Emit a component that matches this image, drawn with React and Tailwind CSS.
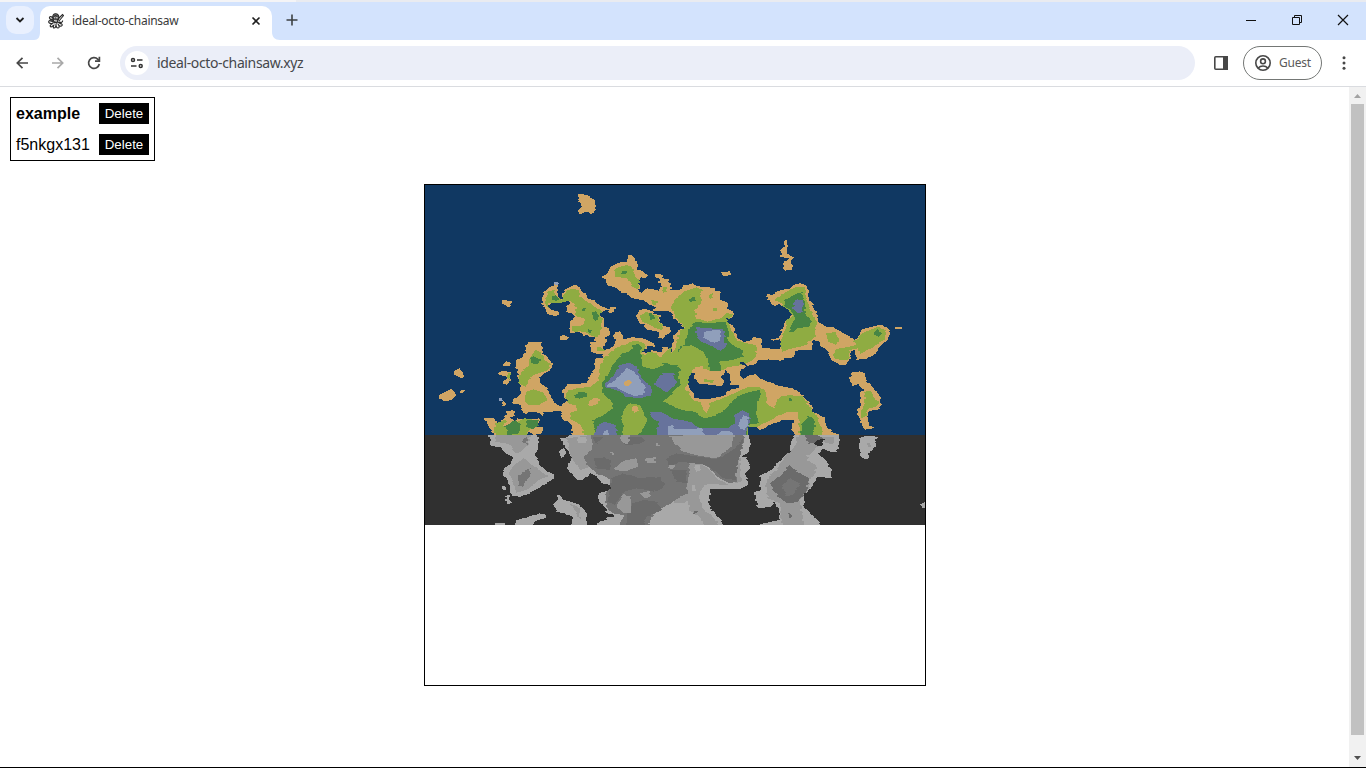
import React from "react";

// Survey frames: origin of each sheet, at three units per pixel.
const FRAMES = {
  A: [480, 250], B: [620, 250], C: [740, 230], D: [480, 370],
  E: [620, 370], F: [740, 370], G: [424, 180], H: [560, 330],
};

// Repeatable coastline roughness, between -1 and 1 pixel.
function rough(x, y) {
  const n = Math.sin(Math.floor(x / 7) * 12.9898 + Math.floor(y / 2) * 78.233) * 43758.5453;
  return (n - Math.floor(n)) * 2.2 - 1.1;
}

// Turns an outline into square cells, row by row.
function cells(src) {
  let frame = FRAMES.A;
  const pts = [];
  src.trim().split(/\s+/).forEach((t) => {
    if (FRAMES[t]) frame = FRAMES[t];
    else {
      const [x, y] = t.split(",").map(Number);
      pts.push([frame[0] + x / 3 - 425, frame[1] + y / 3 - 185]);
    }
  });
  const ys = pts.map((p) => p[1]);
  const top = Math.max(0, Math.floor(Math.min(...ys)));
  const end = Math.min(340, Math.max(...ys));
  let d = "";
  for (let y = top; y < end; y += 1) {
    const c = y + 0.5;
    const xs = [];
    pts.forEach((p, i) => {
      const q = pts[(i + 1) % pts.length];
      if (p[1] <= c !== q[1] <= c) xs.push(p[0] + ((c - p[1]) / (q[1] - p[1])) * (q[0] - p[0]));
    });
    xs.sort((a, b) => a - b);
    for (let i = 0; i + 1 < xs.length; i += 2) {
      const a = Math.round(xs[i] + rough(xs[i], y));
      const b = Math.min(500, Math.round(xs[i + 1] + rough(xs[i + 1], y)));
      if (b > a) d += `M${a} ${y}h${b - a}v1h${a - b}z`;
    }
  }
  return d;
}

const SAND = "#d0a564", GREEN = "#8fac42", FOREST = "#478544", SLATE = "#67739c", PEAK = "#909fbb", SEA = "#103862";

const COLOR_LAYERS = [
  [SAND, [
    "A 64,154 72,150 90,152 96,160 90,170 82,172 74,164 66,162",
    "A 184,145 190,130 205,112 217,108 224,97 234,98 230,106 232,120 236,145 248,148 246,132 262,115 280,108 290,103 300,112 305,122 315,130 320,140 330,148 345,152 352,160 368,170 388,178 392,172 404,172 404,186 392,190 384,180 366,184 360,196 372,204 374,230 386,234 388,256 378,260 376,286 368,290 372,312 350,312 334,304 330,278 344,276 345,262 330,262 320,252 310,258 300,246 285,248 268,250 268,234 272,230 270,212 285,204 276,190 260,186 262,168 270,160 262,152 248,156 236,160 215,160 205,168 214,178 232,184 236,196 222,198 205,192 195,172 186,160",
    "A 240,262 252,254 266,262 264,270 242,270",
    "A 54,370 70,362 90,366 94,380 88,396 78,404 68,402 68,392 80,386 76,378 60,376",
    "A 66,344 80,334 92,340 88,348 68,348",
    "D 64,96 72,94 78,106 68,108",
    "D 14,145 45,145 50,160 75,145 80,125 100,120 105,138 90,142 105,155 115,145 140,150 175,145 180,155 160,172 185,170 185,190 165,195 150,185 130,197 40,197 35,180 20,160",
    `D 245,108 262,90 252,85 248,62 258,52 262,42 A 320,400 332,376 344,358 344,336 352,324 372,325 368,316 376,296 392,296 408,278 402,262 404,246 418,244 428,256 424,268 460,262 490,264 524,280 524,290 504,288 502,296 484,300 B 72,306 88,310 95,300 112,305 125,305 130,292 146,292 148,310 160,305 155,290 162,270 162,256 178,240 195,234 180,222 165,210 150,185 130,182 100,182 105,172 85,160 70,152 45,146 35,142 20,130 0,128 A 418,122 400,110 384,106 376,88 362,80 380,72 392,50 410,40 440,34 B 24,18 36,14 46,24 50,40 54,48 50,58 64,62 84,74 80,84 64,82 56,92 60,110 52,120 66,128 80,115 115,122 120,110 130,112 115,95 118,84 106,82 106,72 128,74 130,84 142,88 150,100 154,120 185,118 190,106 222,100 228,108 280,114 284,122 300,125 300,150 322,158 324,176 344,188 340,200 330,206 318,205 320,218 338,225 345,248 350,264 372,276 395,270 400,262 424,264 424,292 450,296 480,298
     C 122,345 122,328 100,332 95,328 118,322 125,300 135,275 150,262 160,248 148,236 130,228 118,222 105,228 95,224 85,210 78,200 82,192 95,195 120,180 150,176 165,162 185,160 200,170 208,185 206,205 220,225 232,255 240,280 262,290 285,292 300,305 325,318 345,330 360,318 365,300 385,292 412,286 430,286 444,296 448,310 445,328 422,345 410,370 380,385 350,390 346,360 332,365 330,385 320,405 300,405 280,395 270,385 262,365 245,350 240,335 218,330 215,360 190,360 165,362 160,382 135,385 125,392 85,388 50,392 48,402 20,408 B 365,358
     E 358,12 365,28 385,18 405,12 420,26 445,36 460,40 F 110,46 130,50 155,54 175,65 200,88 215,108 220,125 250,140 255,160 275,185 300,197 165,197 155,180 162,150 130,150 100,160 60,180 50,168 25,170 25,197 D 278,197 275,165 250,148 240,122 215,125 190,125 185,140 175,128 150,125 135,132 122,118 120,102 95,100 100,88 118,78 124,60 115,25 112,0 A 112,370 108,350 106,330 130,320 138,300 138,284 150,276 184,276 188,290 186,308 205,322 216,340 216,352 205,365 185,375 180,385 D 180,20 185,40 200,55 215,85 232,106`,
    "B 50,195 58,182 75,176 95,182 100,190 120,195 118,210 125,225 150,232 154,245 140,252 132,266 118,264 112,245 88,240 75,235 72,222 55,220",
    "F 326,30 335,8 360,4 375,10 376,30 395,50 405,60 422,85 425,105 415,120 390,122 380,140 385,165 405,172 385,178 375,180 365,165 358,145 350,120 362,108 360,70 370,60 355,42 340,48",
    "C 134,30 142,30 142,70 160,82 155,95 160,118 135,122 128,115 135,95 148,85 122,80 122,60 132,50",
    "C 464,290 484,290 484,298 464,298",
    "B 304,66 330,64 328,76 308,78",
    "G 462,42 490,45 512,60 516,85 505,102 490,96 475,98 466,104 462,95 475,80 462,60",
    "G 88,575 105,565 118,580 120,596 108,592 90,585",
    "G 48,645 80,626 98,645 80,660 60,664 46,655",
    "G 108,631 120,631 118,639 108,639",
  ]],
  [GREEN, [
    "A 196,148 205,125 222,118 226,140 246,150 248,140 262,122 280,116 295,122 300,140 315,152 330,160 345,170 365,182 360,200 368,206 362,240 356,262 330,256 318,246 300,244 290,246 276,242 278,228 300,228 314,222 316,208 300,202 285,198 288,170 275,155 262,152 240,160 205,160 208,175 198,165",
    "A 80,368 90,368 92,382 86,390 80,384",
    "A 350,292 360,290 372,302 352,304",
    "B -16,60 0,50 20,45 35,50 45,75 60,95 50,120 35,105 20,85 -15,80",
    "A 116,400 120,370 145,345 150,325 165,300 185,310 195,330 212,345 200,362 160,375 150,385 140,410 D 115,40 118,10",
    "D 138,65 160,58 190,68 200,90 180,105 150,105 135,95",
    "D 45,160 80,148 70,170 100,165 110,155 135,145 165,150 150,180 135,197 45,197",
    `D 262,100 256,80 262,62 290,55 330,50 355,30 A 358,376 362,345 370,325 385,315 400,300 430,285 460,272 485,276 500,290 B 62,312 95,318 125,320 150,315 165,300 178,245 195,234 180,218 160,190 155,170 165,150 190,125 215,118 230,112 245,118 248,150 225,180 228,205 260,215 300,205 318,190 338,192 330,206 318,205 328,222 335,245 350,272 380,280 408,285 410,310 400,330 370,345 330,350 300,362 270,362 235,350 222,365 205,400 190,420 E 190,60 215,85 240,95 290,90 340,72 380,50 420,50 440,70 440,100 460,115 480,80 E 510,75 F 190,80 205,105 225,130 240,160 250,185 245,197 178,197 175,125 140,125 110,140 60,165 50,170 25,170 25,197 D 312,197 305,165 275,150 270,130 290,120 285,105`,
    "B 62,196 80,186 100,192 116,200 115,215 130,228 128,240 110,236 90,224 65,215",
    "C 102,212 130,190 165,172 195,170 200,205 210,235 230,280 225,320 195,345 125,365 122,335 135,300 140,270 160,258 135,232 120,215",
    "C 262,310 285,305 300,330 285,345 265,335",
    "C 285,358 330,350 355,342 335,334 350,330 370,310 410,290 435,300 438,325 400,350 360,372 355,355 330,360 325,390 290,388 280,375",
    "F 375,65 395,62 400,85 418,95 410,110 385,115 380,135 362,145 360,125 375,100",
    "B 95,150 110,152 110,166 98,162", "B 128,112 140,110 140,124 126,130",
  ]],
  [SAND, [
    "B 230,185 245,150 240,125 270,118 295,128 298,155 318,165 305,190 285,205 240,208 225,200",
    "D 325,95 345,84 360,86 355,98 335,110 322,105", "E 240,85 270,86 268,110 262,128 250,120 245,105",
  ]],
  [GREEN, ["B 265,135 278,130 280,144 268,146", "B 280,175 292,175 292,182 280,182"]],
  [FOREST, [
    "A 214,140 228,136 238,148 230,152 216,150", "A 306,174 318,176 314,184 306,182", "A 336,188 350,184 356,198 352,208 344,214 336,206", "A 326,238 338,240 334,250 326,246",
    "B 3,62 18,62 18,72 3,72", "A 150,328 160,318 185,330 175,342 155,340",
    "D 75,170 105,150 120,165 118,190 85,195", "D 140,150 175,150 175,165 155,178 140,170", "D 283,75 300,66 322,68 320,80 300,86 285,84",
    "D 345,197 338,150 370,135 400,115 395,95 370,75 365,45 385,10 A 385,370 400,340 430,310 455,300 460,285 475,282 485,290 480,310 B 65,320 65,345 80,352 125,345 130,335 150,345 175,345 185,350 180,380 185,415 E 180,50 160,75 130,90 150,105 185,120 220,125 255,145 290,135 320,115 350,80 390,65 420,60 422,80 412,100 410,140 415,160 385,165 380,197",
    "B 175,305 180,290 195,285 205,240 225,215 260,220 315,215 325,240 325,275 345,290 368,300 370,320 340,330 300,335 300,362 270,364 265,325 245,315 225,290 205,295 190,315",
    "B 208,146 225,140 227,152 214,156", "B 86,190 100,190 102,206 90,210",
    "F 180,197 185,165 205,138 225,150 225,175 215,197", "F 145,85 155,85 155,92 145,92",
    "C 135,210 165,195 185,185 195,215 195,250 212,275 205,290 175,295 165,306 150,305 155,280 165,262 150,240 135,228",
    "C 405,308 412,296 425,310 415,320 405,316",
  ]],
  [GREEN, [
    "D 435,110 450,100 480,105 500,150 480,190 475,197 425,197 430,170 425,140",
    "H 245,85 265,65 290,70 300,85 318,62 335,52 338,78 332,86 305,90 310,105 280,118 250,110",
    "H 338,95 355,75 365,50 395,45 430,65 445,100 420,110 400,115 385,150 375,175 395,195 400,215 345,225 310,215 345,180 365,165 355,145 360,115",
  ]],
  [SAND, [
    "D 455,110 470,107 476,122 460,130",
    "H 372,172 390,160 400,185 408,204 445,206 490,196 510,178 535,170 555,155 600,165 600,172 560,172 520,192 480,208 440,222 400,212 388,190",
    "H 395,130 405,112 430,108 440,130 482,138 492,150 480,168 415,162",
    "H 505,122 522,112 540,120 538,135 550,148 560,160 535,168 515,166 515,140",
  ]],
  [GREEN, ["H 432,148 462,150 460,158 436,156"]],
  [SLATE, [
    "A 375,402 400,375 420,345 445,338 470,350 485,385 D 515,50 515,75 480,85 440,80 410,60 375,52",
    "H 290,145 310,130 340,128 345,145 352,158 330,180 315,188 303,176 285,165",
    "B 228,250 232,232 270,235 310,238 318,290 300,302 270,285 240,272",
    "D 342,197 350,170 375,155 405,165 415,197",
    "E 90,140 95,125 130,128 160,145 210,155 240,175 275,175 320,175 345,160 345,135 365,120 385,130 392,155 380,175 380,197 110,197 115,155",
    "C 162,220 170,208 188,210 188,245 175,250 158,238",
  ]],
  [PEAK, [
    "D 382,45 405,30 A 425,370 440,352 460,362 D 475,20 495,50 490,75 460,78 430,65 410,52 385,52",
    "B 250,250 262,242 300,240 302,272 280,278 250,262", "D 370,182 388,180 388,204 370,204",
    "E 145,170 155,165 165,178 245,175 250,190 260,197 145,197", "E 285,197 310,182 335,185 345,197", "E 357,160 368,136 382,138 388,160 372,180 360,175",
    "A 220,98 232,95 236,103 224,105", "D 58,84 66,84 68,92 60,92",
  ]],
  [SAND, ["D 428,42 445,28 456,38 440,50"]],
  [SEA, [
    "H 385,145 392,130 402,128 405,148 415,160 480,168 492,165 485,138 500,120 508,135 512,165 535,166 535,174 510,178 495,196 470,203 445,207 405,205 398,185 385,170",
    "H 541,95 550,97 560,103 558,108 548,104 540,99",
  ]],
];

const COAST = "#a9a9a9", LOW = "#989898", MID = "#757575", HIGH = "#6b6b6b", DEEP = "#303030";

const GRAY_LAYERS = [
  [COAST, [
    "D 28,190 30,228 60,232 75,250 100,262 95,280 75,295 68,315 85,330 90,350 95,378 120,380 150,370 190,345 225,325 222,312 200,305 180,285 165,255 175,235 172,190",
    "D 78,380 88,375 92,400 80,402", "D 66,348 80,350 78,360 66,358", "D 40,467 50,458 75,458 78,467",
    "D 105,467 110,450 150,440 180,430 200,435 198,445 170,450 160,467",
    "D 218,405 235,385 232,372 245,378 245,390 275,395 300,405 320,430 320,467 270,467 280,440 250,430 230,425",
    "D 238,240 250,235 258,250 248,264 238,255",
    "D 240,205 260,205 270,190 E 385,190 392,210 388,245 372,255 365,262 380,262 392,290 378,310 385,345 360,358 270,358 268,400 275,420 300,445 312,467 D 350,467 355,455 375,450 385,440 400,440 400,432 380,430 375,410 355,395 355,370 385,362 395,345 365,340 350,320 330,310 310,330 295,330 262,300 262,285 275,265 262,240",
    "F 165,190 155,210 150,245 120,270 95,300 60,318 60,360 42,370 55,415 90,410 105,395 120,430 118,450 60,462 60,467 242,467 235,450 205,425 190,405 195,370 220,345 230,320 275,325 275,300 255,270 235,250 245,235 270,245 292,245 300,190",
    "F 358,235 358,205 380,197 410,200 405,230 390,245 380,268 365,262", "F 540,405 556,395 556,412 544,414",
  ]],
  [LOW, [
    "D 48,190 48,215 85,222 110,250 120,245 145,225 150,190", "D 100,290 130,262 150,280 190,310 205,318 180,330 140,360 110,368 100,335 85,310",
    "D 262,205 335,195 335,245 310,262 330,290 300,300 270,255",
    "E 205,270 230,275 260,290 290,325 330,345 260,342 240,360 240,390 250,420 280,440 300,467 215,467 195,440 200,400 160,400 180,370",
    "F 165,230 175,190 230,200 230,230 200,270 230,285 225,310 205,330 210,350 180,390 190,467 125,467 120,400 85,385 75,345 85,320 110,300 130,265",
    "D 270,400 300,415 300,450 285,420", "F 240,200 280,200 280,222 255,218",
    "E 345,270 360,265 365,335 345,340",
  ]],
  [MID, [
    "D 335,190 335,240 310,262 325,290 350,310 385,325 395,350 375,375 380,410 400,430 430,435 420,467 E 85,467 95,440 125,415 160,395 180,380 205,370 200,350 210,300 205,280 225,272 265,290 290,320 330,340 350,335 345,270 365,240 375,200 365,190",
    "D 112,318 140,300 150,295 148,320 130,350 115,348", "D 125,210 145,200 140,225",
  ]],
  [HIGH, [
    "E 140,265 170,250 250,262 290,268 340,240 370,205 350,300 345,330 310,325 280,300 260,285 180,275 145,290",
    "D 345,265 375,262 395,275 385,300 350,295",
    "D 395,325 430,310 480,325 520,320 540,345 520,365 470,355 430,365 405,405 385,395",
    "D 455,400 490,390 530,395 550,420 500,440 490,467 440,467 440,430", "D 340,200 372,200 350,222",
    "E 0,205 60,200 80,212 60,222 20,225", "E 80,330 120,320 135,345 110,365 90,350", "E 150,300 200,300 198,340 170,335",
    "F 92,340 130,310 148,283 165,300 205,325 200,360 175,395 145,400 115,380 100,360", "F 190,190 235,195 250,205 235,215 205,222",
    "F 146,428 160,438 152,446", "E 218,424 230,424 228,432 218,432",
  ]],
  [MID, ["F 125,350 150,325 180,340 160,375 140,378"]],
  [LOW, [
    "E 150,198 345,190 335,230 290,265 240,258 190,245 160,215", "D 400,300 430,272 470,265 475,290 440,303", "D 498,264 525,262 525,280 500,280",
    "D 410,410 430,372 452,380 450,430 430,430", "D 480,370 505,362 515,378 495,386", "D 392,246 400,246 400,256 392,256", "D 422,190 450,190 445,222 425,218", "E 145,285 165,285 160,298 145,294", "E 105,220 118,220 118,228 105,228",
    "F 382,220 392,220 392,230 382,230",
  ]],
  [COAST, ["E 85,467 100,440 125,422 165,415 205,392 210,425 240,440 250,467", "E 225,285 242,285 240,300 228,306", "E 218,345 228,345 228,362 218,362", "D 292,200 318,200 316,220 296,218", "F 200,255 235,255 260,290 245,315 230,310 228,285"]],
  [DEEP, ["F 220,216 255,205 245,226 230,230"]],
];

const PATHS = (layers) => layers.map(([fill, list]) => ({ fill, d: list.map(cells) }));
const LAND = PATHS(COLOR_LAYERS);
const SHADE = PATHS(GRAY_LAYERS);

function Terrain() {
  const draw = (l, i) => l.d.map((d, j) => <path key={`${i}-${j}`} d={d} fill={l.fill} />);
  return (
    <svg className="block" width="500" height="340" viewBox="0 0 500 340" shapeRendering="crispEdges">
      <rect width="500" height="340" fill={SEA} />
      {LAND.map(draw)}
      <rect y="250" width="500" height="90" fill={DEEP} />
      <svg y="250" width="500" height="90" viewBox="0 250 500 90">{SHADE.map(draw)}</svg>
    </svg>
  );
}

function Octo() {
  return (
    <svg className="ml-2 block h-4 w-4" viewBox="0 0 16 16" fill="none" stroke="#2a2a2a" strokeWidth="1.1">
      <path d="M5 6C4 2 6 .5 8 .8S11.500 3 10.500 6L9 10 6 9z" fill="#777" />
      <path d="M9 7l5.500-5.500 1 1L11 8M6 6C4 3 1 3 1.500 5S5 7 5 8.500 2 6.500 1 8s1 3 3 2.500S1 12 2.500 13.500 5 12 6 11 4 15 6 15s2-2 2-4c0 2 0 4 2 4s1-3 0-4c1 2 3 3 4 1.500S12 10 11 9c2 1 4 0 3.500-1.500" />
      <path d="M5.500 3.500l2-1 2 1M6 6h3M5 9l4 1M3 6l2 1m5 2l3 2" />
      <path d="M6 4.800h1m1 0h1.500M6 7.500l3 .5M4 12l3-1" stroke="#ddd" strokeWidth=".9" />
    </svg>
  );
}

function Row({ name, bold }) {
  return (
    <div className="flex h-[31px] items-center justify-between">
      <span className={bold ? "font-bold" : ""}>{name}</span>
      <button className="h-[21px] w-[50px] bg-black text-[13.333px] leading-[21px] text-white">Delete</button>
    </div>
  );
}

export default function App() {
  return (
    <div className="flex h-screen w-full flex-col overflow-hidden bg-white font-['Noto_Sans','Open_Sans',sans-serif]">
      <div className="flex h-0.5 shrink-0 bg-[#e9ebf0]"><div className="w-[296px] bg-[#f4f4f6]" /></div>
      <header className="flex h-[38px] shrink-0 items-start bg-[#d3e3fd]">
        <button className="ml-1.5 mt-1 flex h-7 w-7 items-center justify-center rounded-[10px] bg-[#e9f0fe]">
          <svg width="10" height="8" viewBox="0 0 10 8" fill="none" stroke="#1f1f1f" strokeWidth="1.800"><path d="M1.500 2L5 5.500 8.500 2" /></svg>
        </button>
        <div className="flex h-[38px] w-[250px] shrink-0 self-end">
          <svg className="mt-[30px] h-2 w-1.5 shrink-0" viewBox="0 0 6 8"><path d="M6 0v8H0C4 8 6 5 6 0z" fill="#fff" /></svg>
          <div className="mt-1 flex h-[34px] w-[232px] shrink-0 items-center rounded-t-[10px] bg-white pb-1">
            <Octo />
            <span className="ml-2 w-[179px] whitespace-nowrap text-[12px] tracking-[-0.28px] text-[#3a3a3a]">ideal-octo-chainsaw</span>
            <svg className="h-2.5 w-2.5 shrink-0" viewBox="0 0 10 10" stroke="#1f1f1f" strokeWidth="1.600"><path d="M1.500 1.500l7 7m0-7l-7 7" /></svg>
          </div>
          <svg className="mt-[30px] h-2 w-2 shrink-0" viewBox="0 0 8 8"><path d="M0 0v8H8C3 8 0 5 0 0z" fill="#fff" /></svg>
        </div>
        <svg className="ml-0.5 mt-3 h-3 w-3" viewBox="0 0 12 12" stroke="#3c4043" strokeWidth="1.600"><path d="M6 .5v11M.5 6h11" /></svg>
        <div className="ml-auto mr-[17px] mt-3 flex items-center gap-[34px] text-[#111]">
          <svg width="12" height="12" viewBox="0 0 12 12" stroke="currentColor"><path d="M1 6.500h10" /></svg>
          <svg width="12" height="12" viewBox="0 0 12 12" fill="none" stroke="currentColor"><path d="M1.500 3.500h7v7h-7zM3.500 3.500v-2h7v7h-2" /></svg>
          <svg width="12" height="12" viewBox="0 0 12 12" stroke="currentColor" strokeWidth="1.200"><path d="M1 1l10 10M11 1L1 11" /></svg>
        </div>
      </header>
      <nav className="flex h-[47px] shrink-0 items-center border-b border-[#dadce0] bg-white text-[#474747]">
        <svg className="ml-4 h-3 w-3" viewBox="0 0 12 12" fill="none" stroke="currentColor" strokeWidth="1.700"><path d="M12 6H1.500M6.500 .8L1.300 6l5.200 5.200" /></svg>
        <svg className="ml-6 h-3 w-3 text-[#a9a9a9]" viewBox="0 0 12 12" fill="none" stroke="currentColor" strokeWidth="1.700"><path d="M0 6h10.500M5.500 .8L10.700 6l-5.200 5.200" /></svg>
        <svg className="ml-[23px] h-3.5 w-3.5" viewBox="0 0 14 14" fill="none" stroke="currentColor" strokeWidth="1.700"><path d="M12.300 8A5.400 5.400 0 1 1 10.900 3.300L12 4.500" /><path d="M12.400 .8v4.400H8" /></svg>
        <div className="ml-[19px] flex h-[34px] w-[1075px] items-center rounded-full bg-[#ebeef8]">
          <div className="ml-[5px] flex h-6 w-6 items-center justify-center rounded-full bg-white">
            <svg width="14" height="12" viewBox="0 0 14 12" fill="none" stroke="#333" strokeWidth="1.500"><circle cx="3" cy="3" r="1.500" /><path d="M7 3h5.500M1 9h5.500" /><circle cx="10.700" cy="9" r="1.500" /></svg>
          </div>
          <span className="ml-2 pb-px text-[14px] tracking-[-0.37px] text-[#45474b]">ideal-octo-chainsaw.xyz</span>
        </div>
        <svg className="ml-[19px] h-3.5 w-3.5" viewBox="0 0 14 14"><rect x=".8" y=".8" width="12.400" height="12.400" rx="1" fill="none" stroke="currentColor" strokeWidth="1.600" /><path d="M9 0h5v14H9z" fill="currentColor" /></svg>
        <button className="ml-[15px] flex h-[34px] w-[79px] items-center rounded-full border border-[#747775] pl-[11px]">
          <svg width="16" height="16" viewBox="0 0 16 16" fill="none" stroke="currentColor" strokeWidth="1.600"><circle cx="8" cy="8" r="7.200" /><circle cx="8" cy="6.300" r="2.400" /><path d="M3.200 13c2.400-2.700 7.200-2.700 9.600 0" /></svg>
          <span className="ml-2 text-[12px] tracking-[-0.25px] text-[#5a5a5a]">Guest</span>
        </button>
        <svg className="ml-5 h-3.5 w-1" viewBox="0 0 4 14" fill="currentColor"><circle cx="2" cy="1.700" r="1.500" /><circle cx="2" cy="7" r="1.500" /><circle cx="2" cy="12.300" r="1.500" /></svg>
      </nav>
      <div className="flex min-h-0 flex-1 border-b border-black">
        <main className="min-w-0 flex-1 font-['Liberation_Sans',Arial,sans-serif]">
          <section className="ml-2.5 mt-2.5 h-16 w-[145px] border border-black px-[5px] text-[16px] text-black">
            <Row name="example" bold />
            <Row name="f5nkgx131" />
          </section>
          <div className="ml-[424px] mt-[23px] h-[502px] w-[502px] border border-black"><Terrain /></div>
        </main>
        <aside className="flex w-[17px] flex-col items-center bg-[#f1f1f1]">
          <svg className="h-[17px] w-[17px] shrink-0" viewBox="0 0 17 17"><path d="M5 11l3.500-4L12 11z" fill="#a3a3a3" /></svg>
          <div className="h-[631px] w-[13px] bg-[#c1c1c1]" />
          <svg className="mt-auto h-[17px] w-[17px] shrink-0" viewBox="0 0 17 17"><path d="M5 6l3.500 4L12 6z" fill="#505050" /></svg>
        </aside>
      </div>
    </div>
  );
}
